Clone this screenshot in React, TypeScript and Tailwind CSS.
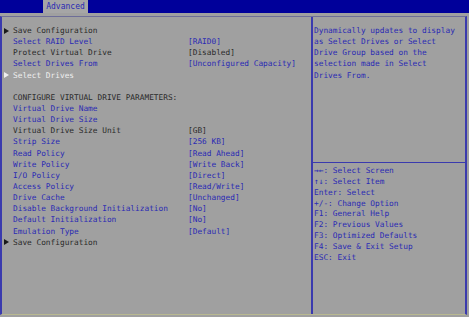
const rows: { label: string; value?: string; tone: 'blue' | 'dark' | 'white' | 'spacer'; arrow?: 'dark' | 'white' }[] = [
  { label: 'Save Configuration', tone: 'dark', arrow: 'dark' },
  { label: 'Select RAID Level', value: '[RAID0]', tone: 'blue' },
  { label: 'Protect Virtual Drive', value: '[Disabled]', tone: 'dark' },
  { label: 'Select Drives From', value: '[Unconfigured Capacity]', tone: 'blue' },
  { label: 'Select Drives', tone: 'white', arrow: 'white' },
  { label: '', tone: 'spacer' },
  { label: 'CONFIGURE VIRTUAL DRIVE PARAMETERS:', tone: 'dark' },
  { label: 'Virtual Drive Name', tone: 'blue' },
  { label: 'Virtual Drive Size', tone: 'blue' },
  { label: 'Virtual Drive Size Unit', value: '[GB]', tone: 'dark' },
  { label: 'Strip Size', value: '[256 KB]', tone: 'blue' },
  { label: 'Read Policy', value: '[Read Ahead]', tone: 'blue' },
  { label: 'Write Policy', value: '[Write Back]', tone: 'blue' },
  { label: 'I/O Policy', value: '[Direct]', tone: 'blue' },
  { label: 'Access Policy', value: '[Read/Write]', tone: 'blue' },
  { label: 'Drive Cache', value: '[Unchanged]', tone: 'blue' },
  { label: 'Disable Background Initialization', value: '[No]', tone: 'blue' },
  { label: 'Default Initialization', value: '[No]', tone: 'blue' },
  { label: 'Emulation Type', value: '[Default]', tone: 'blue' },
  { label: 'Save Configuration', tone: 'dark', arrow: 'dark' },
];

const keys = [
  '\u2192\u2190: Select Screen',
  '\u2191\u2193: Select Item',
  'Enter: Select',
  '+/-: Change Option',
  'F1: General Help',
  'F2: Previous Values',
  'F3: Optimized Defaults',
  'F4: Save & Exit Setup',
  'ESC: Exit',
];

const toneClass = {
  blue: 'text-[#2a2ab4]',
  dark: 'text-[#2a2a2a]',
  white: 'text-[#efefef]',
  spacer: '',
};

export default function App() {
  return (
    <div className="w-[469px] h-[317px] bg-[#a0a0a0] font-['DejaVu_Sans_Mono',monospace] text-[7.8px] leading-[11.15px] overflow-hidden flex flex-col">
      {/* Tab bar */}
      <div className="h-[13px] bg-[#00009a] flex shrink-0">
        <div className="ml-[43px] w-[45px] bg-[#a6a6a6] text-[#2a2ab4] text-[8px] leading-[13px] text-center">
          Advanced
        </div>
      </div>

      {/* Main frame */}
      <div className="mt-[3px] w-[467px] h-[299px] flex border-l-2 border-r-2 border-t border-b border-l-[#3a3aae] border-r-[#3a3aae] border-t-[#6e6e98] border-b-[#b8b890]">
        {/* Left panel */}
        <div className="w-[311px] pt-[8px] border-r-2 border-[#3a3aae]">
          {rows.map((r, i) =>
            r.tone === 'spacer' ? (
              <div key={i} className="h-[11.15px]" />
            ) : (
              <div key={i} className="flex items-center h-[11.15px] whitespace-nowrap">
                <span className="w-[11px] pl-[2px] flex items-center">
                  {r.arrow && (
                    <svg width="5" height="6" viewBox="0 0 5 6">
                      <path d="M0 0 L5 3 L0 6 Z" fill={r.arrow === 'white' ? '#f0f0f0' : '#1a1a1a'} />
                    </svg>
                  )}
                </span>
                <span className={`w-[175px] ${toneClass[r.tone]}`}>{r.label}</span>
                {r.value && (
                  <span className={r.tone === 'dark' ? 'text-[#2a2a2a]' : 'text-[#2a2ab4]'}>{r.value}</span>
                )}
              </div>
            )
          )}
        </div>

        {/* Right panel */}
        <div className="flex-1 flex flex-col text-[#2a2ab4]">
          <div className="h-[146px] pt-[8px] pl-[1px] border-b border-[#3a3aae]">
            <div>Dynamically updates to display</div>
            <div>as Select Drives or Select</div>
            <div>Drive Group based on the</div>
            <div>selection made in Select</div>
            <div>Drives From.</div>
          </div>
          <div className="pt-[3px] pl-[1px] leading-[10.85px]">
            {keys.map((k) => (
              <div key={k} className="whitespace-nowrap">{k}</div>
            ))}
          </div>
        </div>
      </div>
    </div>
  );
}
